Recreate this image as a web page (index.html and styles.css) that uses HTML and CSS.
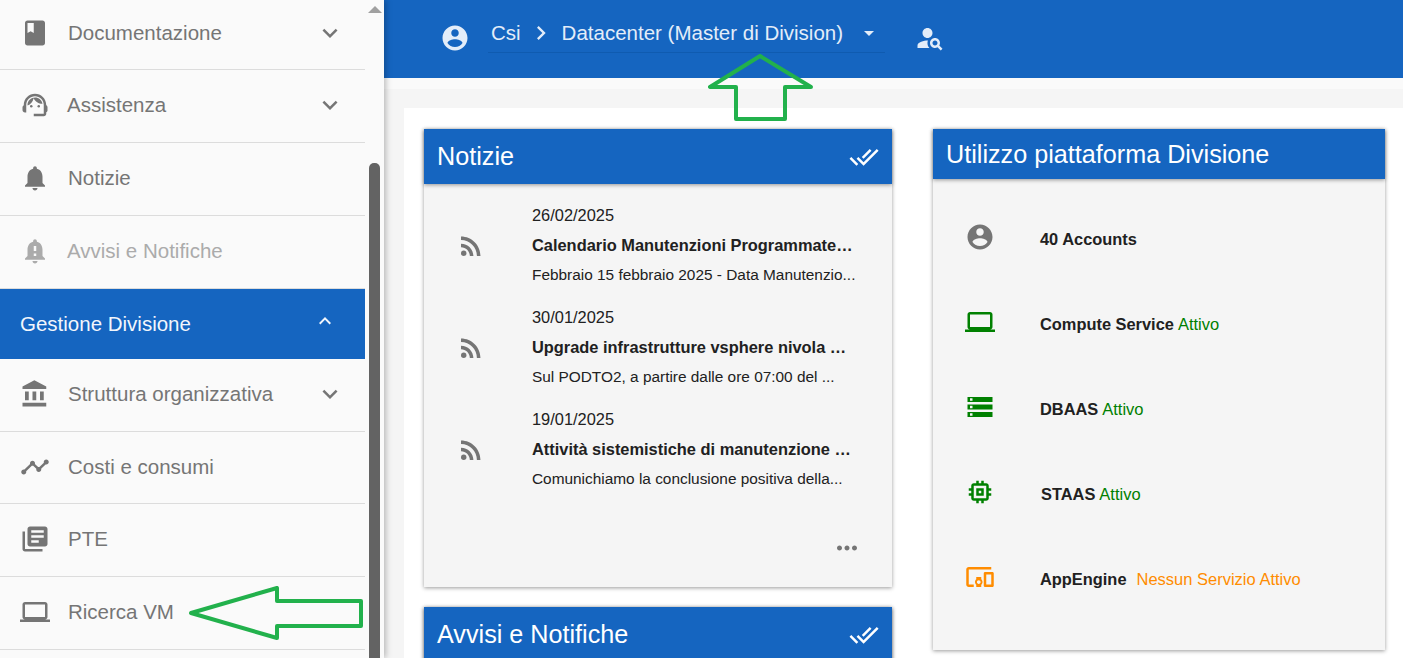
FILE: index.html
```html
<!DOCTYPE html>
<html lang="it">
<head>
    <meta charset="UTF-8">
    <title>Gestione Divisione</title>
    <link rel="stylesheet" href="styles.css">
</head>
<body>

<!-- Icons used more than once -->
<svg class="sprite">
    <symbol id="i-down" viewBox="0 0 24 24"><path d="M16.59 8.59L12 13.17 7.41 8.59 6 10l6 6 6-6z"/></symbol>
    <symbol id="i-up" viewBox="0 0 24 24"><path d="M12 8l-6 6 1.41 1.41L12 10.83l4.59 4.58L18 14z"/></symbol>
    <symbol id="i-account" viewBox="0 0 24 24"><path d="M12 2C6.48 2 2 6.48 2 12s4.48 10 10 10 10-4.48 10-10S17.52 2 12 2zm0 3c1.66 0 3 1.34 3 3s-1.34 3-3 3-3-1.34-3-3 1.34-3 3-3zm0 14.2c-2.5 0-4.71-1.28-6-3.22.03-1.99 4-3.08 6-3.08 1.99 0 5.97 1.09 6 3.08-1.29 1.94-3.5 3.22-6 3.22z"/></symbol>
    <symbol id="i-laptop" viewBox="0 0 24 24"><path d="M20 18c1.1 0 1.99-.9 1.99-2L22 6c0-1.1-.9-2-2-2H4c-1.1 0-2 .9-2 2v10c0 1.1.9 2 2 2H0v2h24v-2h-4zM4 6h16v10H4V6z"/></symbol>
    <symbol id="i-rss" viewBox="0 0 24 24"><circle cx="6.18" cy="17.82" r="2.18"/><path d="M4 4.44v2.83c7.03 0 12.73 5.7 12.73 12.73h2.83c0-8.59-6.97-15.56-15.56-15.56zm0 5.66v2.83c3.9 0 7.07 3.17 7.07 7.07h2.83c0-5.47-4.43-9.9-9.9-9.9z"/></symbol>
    <symbol id="i-done" viewBox="0 0 24 24"><path d="M18 7l-1.41-1.41-6.34 6.34 1.41 1.41L18 7zm4.24-1.41L11.66 16.17 7.48 12l-1.41 1.41L11.66 19l12-12-1.42-1.41zM.41 13.41L6 19l1.41-1.41L1.83 12 .41 13.41z"/></symbol>
</svg>

<div class="sidebar">
    <ul class="menu">
        <li class="menu-item first">
            <svg class="icon" viewBox="0 0 24 24"><path d="M18 2H6c-1.1 0-2 .9-2 2v16c0 1.1.9 2 2 2h12c1.1 0 2-.9 2-2V4c0-1.1-.9-2-2-2zM6 4h5v8l-2.5-1.5L6 12V4z"/></svg>
            <span class="menu-label">Documentazione</span>
            <svg class="icon"><use href="#i-down"/></svg>
        </li>
        <li class="menu-item">
            <svg class="icon" viewBox="0 0 24 24"><path d="M21 12.22C21 6.73 16.74 3 12 3c-4.69 0-9 3.65-9 9.28-.6.34-1 .98-1 1.72v2c0 1.1.9 2 2 2h1v-6.1c0-3.87 3.13-7 7-7s7 3.13 7 7V19h-8v2h8c1.1 0 2-.9 2-2v-1.22c.59-.31 1-.92 1-1.64v-2.3c0-.7-.41-1.31-1-1.62z"/><circle cx="9" cy="13" r="1"/><circle cx="15" cy="13" r="1"/><path d="M18 11.03C17.52 8.18 15.04 6 12.05 6c-3.03 0-6.29 2.51-6.03 6.45 2.47-1.01 4.33-3.21 4.86-5.89 1.31 2.63 4 4.44 7.12 4.47z"/></svg>
            <span class="menu-label nudge">Assistenza</span>
            <svg class="icon"><use href="#i-down"/></svg>
        </li>
        <li class="menu-item">
            <svg class="icon" viewBox="0 0 24 24"><path d="M12 22c1.1 0 2-.9 2-2h-4c0 1.1.89 2 2 2zm6-6v-5c0-3.07-1.64-5.64-4.5-6.32V4c0-.83-.67-1.5-1.5-1.5s-1.5.67-1.5 1.5v.68C7.63 5.36 6 7.92 6 11v5l-2 2v1h16v-1l-2-2z"/></svg>
            <span class="menu-label">Notizie</span>
        </li>
        <li class="menu-item disabled">
            <svg class="icon" viewBox="0 0 24 24"><path d="M18 16v-5c0-3.07-1.64-5.64-4.5-6.32V4c0-.83-.67-1.5-1.5-1.5s-1.5.67-1.5 1.5v.68C7.63 5.36 6 7.92 6 11v5l-2 2v1h16v-1l-2-2zm-5 0h-2v-2h2v2zm0-4h-2V8h2v4zm-1 10c1.1 0 2-.9 2-2h-4c0 1.1.89 2 2 2z"/></svg>
            <span class="menu-label nudge">Avvisi e Notifiche</span>
        </li>
        <li class="menu-group">
            <span class="menu-label">Gestione Divisione</span>
            <svg class="icon-small"><use href="#i-up"/></svg>
        </li>
        <li class="menu-item">
            <svg class="icon" viewBox="0 0 24 24"><path d="M4 10v7h3v-7H4zm6 0v7h3v-7h-3zM2 22h19v-3H2v3zm14-12v7h3v-7h-3zm-4.5-9L2 6v2h19V6l-9.5-5z"/></svg>
            <span class="menu-label">Struttura organizzativa</span>
            <svg class="icon"><use href="#i-down"/></svg>
        </li>
        <li class="menu-item short">
            <svg class="icon" viewBox="0 0 24 24"><path d="M23 8c0 1.1-.9 2-2 2-.18 0-.35-.02-.51-.07l-3.56 3.55c.05.16.07.34.07.52 0 1.1-.9 2-2 2s-2-.9-2-2c0-.18.02-.36.07-.52l-2.55-2.55c-.16.05-.34.07-.52.07s-.36-.02-.52-.07l-4.55 4.56c.05.16.07.33.07.51 0 1.1-.9 2-2 2s-2-.9-2-2 .9-2 2-2c.18 0 .35.02.51.07l4.56-4.55C8.02 9.36 8 9.18 8 9c0-1.1.9-2 2-2s2 .9 2 2c0 .18-.02.36-.07.52l2.55 2.55c.16-.05.34-.07.52-.07s.36.02.52.07l3.55-3.56C19.02 8.35 19 8.18 19 8c0-1.1.9-2 2-2s2 .9 2 2z"/></svg>
            <span class="menu-label">Costi e consumi</span>
        </li>
        <li class="menu-item">
            <svg class="icon" viewBox="0 0 24 24"><path d="M4 6H2v14c0 1.1.9 2 2 2h14v-2H4V6zm16-4H8c-1.1 0-2 .9-2 2v12c0 1.1.9 2 2 2h12c1.1 0 2-.9 2-2V4c0-1.1-.9-2-2-2zm-1 9H9V9h10v2zm-4 4H9v-2h6v2zm4-8H9V5h10v2z"/></svg>
            <span class="menu-label">PTE</span>
        </li>
        <li class="menu-item">
            <svg class="icon"><use href="#i-laptop"/></svg>
            <span class="menu-label">Ricerca VM</span>
        </li>
    </ul>
    <div class="scrollbar">
        <div class="scroll-arrow"></div>
        <div class="scroll-thumb"></div>
    </div>
</div>

<div class="main">
    <div class="topbar">
        <svg class="icon icon-user"><use href="#i-account"/></svg>
        <div class="crumbs">
            <span>Csi</span>
            <svg class="crumb-sep" viewBox="0 0 24 24"><path d="M10 6L8.59 7.41 13.17 12l-4.58 4.59L10 18l6-6z"/></svg>
            <span class="crumb-current">Datacenter (Master di Division)</span>
            <svg class="crumb-drop" viewBox="0 0 24 24"><path d="M7 10l5 5 5-5z"/></svg>
        </div>
        <svg class="icon icon-search" viewBox="0 0 24 24"><path d="M10 12c2.21 0 4-1.79 4-4s-1.79-4-4-4-4 1.79-4 4 1.79 4 4 4zM10.35 14.01C7.62 13.91 2 15.27 2 18v2h9.54c-2.47-2.76-1.23-5.89-1.19-5.99zM19.43 18.02c.36-.59.57-1.28.57-2.02 0-2.21-1.79-4-4-4s-4 1.79-4 4 1.79 4 4 4c.74 0 1.43-.22 2.02-.57L20.59 22 22 20.59l-2.57-2.57zM16 18c-1.1 0-2-.9-2-2s.9-2 2-2 2 .9 2 2-.9 2-2 2z"/></svg>
    </div>
    <div class="strip"></div>
    <div class="content">
        <div class="panel">
            <div class="col-left">
                <div class="card">
                    <div class="card-head">
                        <span class="card-title">Notizie</span>
                        <svg class="icon"><use href="#i-done"/></svg>
                    </div>
                    <div class="card-body news-body">
                        <div class="news">
                            <svg class="icon news-icon"><use href="#i-rss"/></svg>
                            <div class="news-text">
                                <div>26/02/2025</div>
                                <div class="news-title">Calendario Manutenzioni Programmate…</div>
                                <div class="news-desc">Febbraio 15 febbraio 2025 - Data Manutenzio...</div>
                            </div>
                        </div>
                        <div class="news">
                            <svg class="icon news-icon"><use href="#i-rss"/></svg>
                            <div class="news-text">
                                <div>30/01/2025</div>
                                <div class="news-title">Upgrade infrastrutture vsphere nivola …</div>
                                <div class="news-desc">Sul PODTO2, a partire dalle ore 07:00 del ...</div>
                            </div>
                        </div>
                        <div class="news">
                            <svg class="icon news-icon"><use href="#i-rss"/></svg>
                            <div class="news-text">
                                <div>19/01/2025</div>
                                <div class="news-title">Attività sistemistiche di manutenzione …</div>
                                <div class="news-desc">Comunichiamo la conclusione positiva della...</div>
                            </div>
                        </div>
                        <div class="news-more">
                            <svg class="icon" viewBox="0 0 24 24"><path d="M6 10c-1.1 0-2 .9-2 2s.9 2 2 2 2-.9 2-2-.9-2-2-2zm12 0c-1.1 0-2 .9-2 2s.9 2 2 2 2-.9 2-2-.9-2-2-2zm-6 0c-1.1 0-2 .9-2 2s.9 2 2 2 2-.9 2-2-.9-2-2-2z"/></svg>
                        </div>
                    </div>
                </div>
                <div class="card">
                    <div class="card-head">
                        <span class="card-title">Avvisi e Notifiche</span>
                        <svg class="icon"><use href="#i-done"/></svg>
                    </div>
                </div>
            </div>
            <div class="card col-right">
                <div class="card-head head-short">
                    <span class="card-title">Utilizzo piattaforma Divisione</span>
                </div>
                <div class="card-body usage-body">
                    <div class="usage">
                        <svg class="icon usage-icon"><use href="#i-account"/></svg>
                        <span class="usage-name">40 Accounts</span>
                    </div>
                    <div class="usage ok">
                        <svg class="icon usage-icon"><use href="#i-laptop"/></svg>
                        <span class="usage-name">Compute Service</span>
                        <span>Attivo</span>
                    </div>
                    <div class="usage ok">
                        <svg class="icon usage-icon" viewBox="0 0 24 24"><path d="M2 20h20v-4H2v4zm2-3h2v2H4v-2zM2 4v4h20V4H2zm4 3H4V5h2v2zm-4 7h20v-4H2v4zm2-3h2v2H4v-2z"/></svg>
                        <span class="usage-name">DBAAS</span>
                        <span>Attivo</span>
                    </div>
                    <div class="usage ok">
                        <svg class="icon usage-icon" viewBox="0 0 24 24"><path d="M15 9H9v6h6V9zm-2 4h-2v-2h2v2zm8-2V9h-2V7c0-1.1-.9-2-2-2h-2V3h-2v2h-2V3H9v2H7c-1.1 0-2 .9-2 2v2H3v2h2v2H3v2h2v2c0 1.1.9 2 2 2h2v2h2v-2h2v2h2v-2h2c1.1 0 2-.9 2-2v-2h2v-2h-2v-2h2zm-4 6H7V7h10v10z"/></svg>
                        <span class="usage-name staas">STAAS</span>
                        <span>Attivo</span>
                    </div>
                    <div class="usage none">
                        <svg class="icon usage-icon" viewBox="0 0 24 24"><path d="M3 6h18V4H3c-1.1 0-2 .9-2 2v12c0 1.1.9 2 2 2h4v-2H3V6zm10 6H9v1.78c-.61.55-1 1.33-1 2.22s.39 1.67 1 2.22V20h4v-1.78c.61-.55 1-1.34 1-2.22s-.39-1.67-1-2.22V12zm-2 5.5c-.83 0-1.5-.67-1.5-1.5s.67-1.5 1.5-1.5 1.5.67 1.5 1.5-.67 1.5-1.5 1.5zM22 8h-6c-.5 0-1 .5-1 1v10c0 .5.5 1 1 1h6c.5 0 1-.5 1-1V9c0-.5-.5-1-1-1zm-1 10h-4v-8h4v8z"/></svg>
                        <span class="usage-name">AppEngine</span>
                        <span class="usage-none">Nessun Servizio Attivo</span>
                    </div>
                </div>
            </div>
        </div>
    </div>
</div>

<!-- Green arrows drawn over the screenshot -->
<svg class="mark mark-up" viewBox="0 0 110 70"><polygon points="52,2 2,33 28,33 28,65 77,65 77,33 103,33"/></svg>
<svg class="mark mark-left" viewBox="0 0 180 60"><polygon points="3,27 89,2 89,15 173,15 173,40 89,40 89,52"/></svg>

</body>
</html>
```

FILE: styles.css
```css
html, body {
    height: 100%;
}
body {
    font-family: "Liberation Sans", Arial, sans-serif;
    margin: 0;
    display: flex;
    overflow: hidden;
    position: relative;
    background-color: #f5f5f5;
}
.sprite {
    display: none;
}
.icon {
    width: 30px;
    height: 30px;
    flex: none;
    fill: currentColor;
}
.icon-small {
    width: 24px;
    height: 24px;
    flex: none;
    fill: currentColor;
}

/* Sidebar */
.sidebar {
    width: 384px;
    height: 100%;
    flex: none;
    display: flex;
    overflow: hidden;
    background-color: #fafafa;
    box-shadow: 2px 0 6px rgba(0, 0, 0, 0.25);
    position: relative;
    z-index: 1;
}
.menu {
    list-style: none;
    width: 365px;
    margin: 0;
    padding: 0;
}
.menu-item {
    height: 73px;
    box-sizing: border-box;
    border-bottom: 1px solid #dcdcdc;
    display: flex;
    align-items: center;
    padding: 0 20px 2px;
    color: #757575;
}
.menu-item.first {
    height: 70px;
    padding-bottom: 4px;
}
.menu-item.short {
    height: 72px;
}
.menu-item.disabled {
    color: #ababab;
}
.menu-label {
    font-size: 20.5px;
    margin-left: 18px;
    margin-right: auto;
}
.menu-label.nudge {
    margin-left: 17px;
}
.menu-group {
    height: 70px;
    display: flex;
    align-items: center;
    padding: 0 28px 0 20px;
    background-color: #1565c0;
    color: #f2f6fc;
}
.menu-group .menu-label {
    margin-left: 0;
}
.menu-group .icon-small {
    margin-top: -6px;
}
.scrollbar {
    width: 19px;
    display: flex;
    flex-direction: column;
    align-items: center;
}
.scroll-arrow {
    width: 0;
    height: 0;
    margin-top: 6px;
    border-left: 7px solid transparent;
    border-right: 7px solid transparent;
    border-bottom: 7px solid #a0a0a0;
}
.scroll-thumb {
    width: 11px;
    flex: 1;
    margin-top: 150px;
    background-color: #636363;
    border-radius: 5px 5px 0 0;
}

/* Top bar */
.main {
    flex: 1;
    min-width: 0;
    height: 100%;
    overflow: hidden;
    display: flex;
    flex-direction: column;
}
.topbar {
    height: 78px;
    flex: none;
    background-color: #1565c0;
    color: #e3edf9;
    display: flex;
    align-items: flex-start;
    padding-left: 56px;
}
.icon-user {
    margin-top: 23px;
}
.crumbs {
    width: 397px;
    height: 53px;
    margin-left: 18px;
    box-sizing: border-box;
    border-bottom: 1px solid #0f5bb0;
    display: flex;
    align-items: center;
    padding: 14px 0 0 3px;
    font-size: 20.5px;
}
.crumb-sep {
    width: 28px;
    height: 28px;
    margin-left: 6px;
    fill: currentColor;
}
.crumb-current {
    margin-left: 7px;
}
.crumb-drop {
    width: 24px;
    height: 24px;
    margin-left: 14px;
    fill: currentColor;
}
.icon-search {
    margin: 23px 0 0 30px;
}
.strip {
    height: 11px;
    flex: none;
    background-color: #fafafa;
}

/* Content */
.content {
    flex: 1;
    padding: 19px 0 0 20px;
    min-height: 0;
}
.panel {
    height: 100%;
    background-color: #fff;
    padding: 21px 18px 0 20px;
    box-sizing: border-box;
    display: flex;
    gap: 41px;
}
.col-left {
    width: 468px;
    flex: none;
    display: flex;
    flex-direction: column;
    gap: 20px;
}
.col-right {
    width: 452px;
    flex: none;
    align-self: flex-start;
}
.card {
    flex: none;
    background-color: #f5f5f5;
    box-shadow: 0 1px 4px rgba(0, 0, 0, 0.4);
}
.card-head {
    height: 55px;
    box-sizing: border-box;
    background-color: #1565c0;
    color: #fff;
    display: flex;
    align-items: center;
    justify-content: space-between;
    padding: 0 13px;
    box-shadow: 0 1px 4px rgba(0, 0, 0, 0.4);
    position: relative;
}
.head-short {
    height: 50px;
}
.card-title {
    font-size: 25.2px;
    white-space: nowrap;
}

/* Notizie */
.news-body {
    height: 403px;
    box-sizing: border-box;
    padding-top: 17px;
    display: flex;
    flex-direction: column;
}
.news {
    height: 102px;
    flex: none;
    display: flex;
    padding-left: 32px;
    font-size: 16.4px;
    color: #212121;
}
.news-icon {
    color: #757575;
    margin: 30px 46px 0 0;
}
.news-text {
    line-height: 29.5px;
    white-space: nowrap;
}
.news-title {
    font-weight: bold;
}
.news-desc {
    font-size: 15.4px;
}
.news-more {
    margin-top: auto;
    padding: 0 30px 24px 0;
    display: flex;
    justify-content: flex-end;
    color: #757575;
}

/* Utilizzo piattaforma */
.usage-body {
    height: 471px;
    box-sizing: border-box;
    padding-top: 18px;
}
.usage {
    height: 85px;
    display: flex;
    align-items: center;
    gap: 4px;
    padding-left: 32px;
    font-size: 16.5px;
    color: #757575;
}
.usage-icon {
    margin: -5px 41px 0 0;
}
.usage-name {
    font-weight: bold;
    font-size: 16.4px;
    color: #212121;
}
.usage-name.staas {
    margin-left: 1px;
}
.usage.ok {
    color: #008000;
}
.usage.none {
    color: #ff8c00;
}
.usage-none {
    margin-left: 6px;
}

/* Green arrows */
.mark {
    position: absolute;
    z-index: 2;
    fill: none;
    stroke: #22b14c;
    stroke-width: 4;
    stroke-linejoin: round;
}
.mark-up {
    left: 708px;
    top: 54px;
    width: 110px;
    height: 70px;
}
.mark-left {
    left: 188px;
    top: 586px;
    width: 180px;
    height: 60px;
}
```
